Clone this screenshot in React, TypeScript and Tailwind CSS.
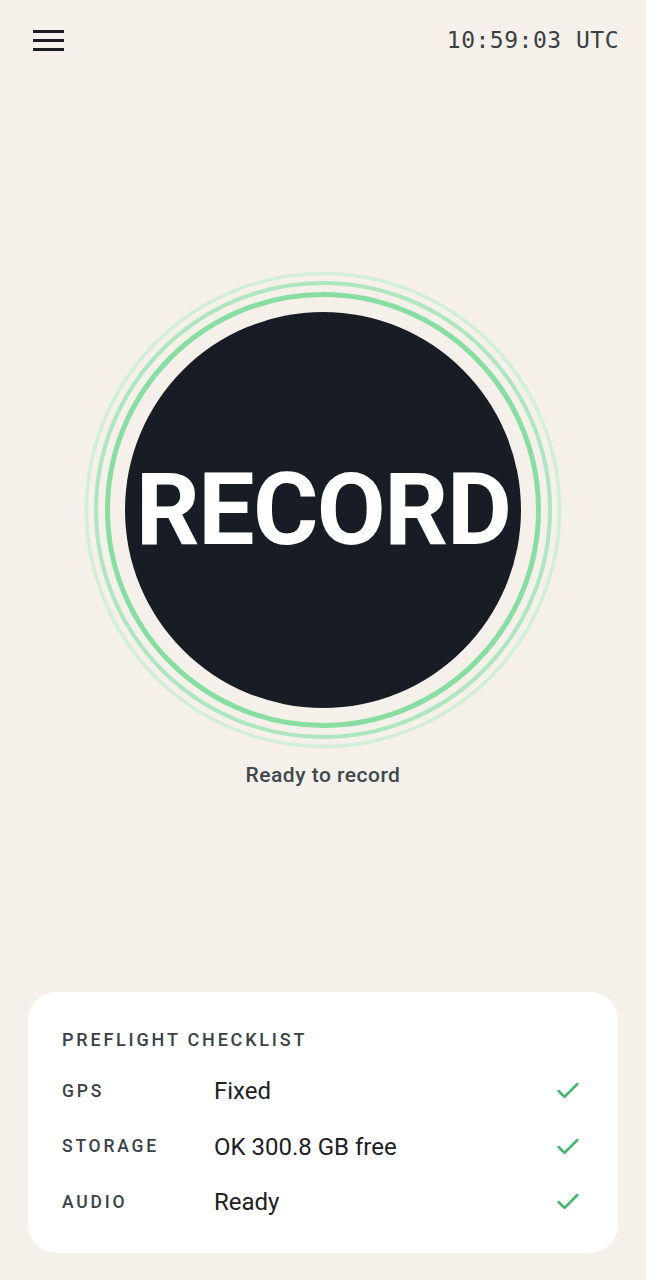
import { Check } from 'lucide-react';

const checks = [
  { label: 'GPS', value: 'Fixed' },
  { label: 'STORAGE', value: 'OK 300.8 GB free' },
  { label: 'AUDIO', value: 'Ready' },
];

function Rings() {
  return (
    <svg width="480" height="480" viewBox="0 0 480 480" className="absolute inset-0">
      <circle cx="240" cy="240" r="236.5" fill="none" stroke="#d0eed8" strokeWidth="3.5" />
      <circle cx="240" cy="240" r="227" fill="none" stroke="#ade6bf" strokeWidth="4" />
      <circle cx="240" cy="240" r="215.5" fill="none" stroke="#88dea2" strokeWidth="5" />
    </svg>
  );
}

export default function App() {
  return (
    <div className="min-h-[1280px] w-full bg-[#f5f0e9] flex flex-col font-['Roboto',sans-serif]">
      <header className="flex items-center justify-between pl-[33px] pr-[27px] pt-[24px] h-[56px]">
        <button className="flex flex-col gap-[6px] w-[31px]">
          <span className="h-[3px] w-full bg-[#1b1d20]" />
          <span className="h-[3px] w-full bg-[#1b1d20]" />
          <span className="h-[3px] w-full bg-[#1b1d20]" />
        </button>
        <span className="font-['DejaVu_Sans_Mono',monospace] text-[23px] text-[#3b4045] tracking-[0.5px]">
          10:59:03 UTC
        </span>
      </header>

      <main className="flex flex-col items-center pt-[214px]">
        <div className="relative w-[480px] h-[480px] flex items-center justify-center">
          <Rings />
          <button className="relative w-[396px] h-[396px] rounded-full bg-[#181c24] flex items-center justify-center">
            <span className="text-white font-bold text-[100px] tracking-[-1.5px] leading-none">RECORD</span>
          </button>
        </div>
        <p className="mt-[10px] text-[21px] font-medium text-[#3f484d] tracking-[0.5px]">Ready to record</p>
      </main>

      <section className="mt-auto mx-[28px] mb-[27px] bg-white rounded-[28px] px-[34px] pt-[36px] pb-[35px]">
        <h2 className="text-[18px] font-medium tracking-[2.8px] text-[#3a4248] leading-[24px]">PREFLIGHT CHECKLIST</h2>
        <div className="mt-[23px] flex flex-col gap-[23.5px]">
          {checks.map((c) => (
            <div key={c.label} className="flex items-center h-[32px]">
              <span className="w-[152px] text-[17.5px] font-medium tracking-[2.8px] text-[#3a4248]">{c.label}</span>
              <span className="flex-1 text-[24px] text-[#1d2024]">{c.value}</span>
              <Check className="w-[28px] h-[28px] text-[#42b86d] mr-[2px]" strokeWidth={2.2} />
            </div>
          ))}
        </div>
      </section>
    </div>
  );
}
